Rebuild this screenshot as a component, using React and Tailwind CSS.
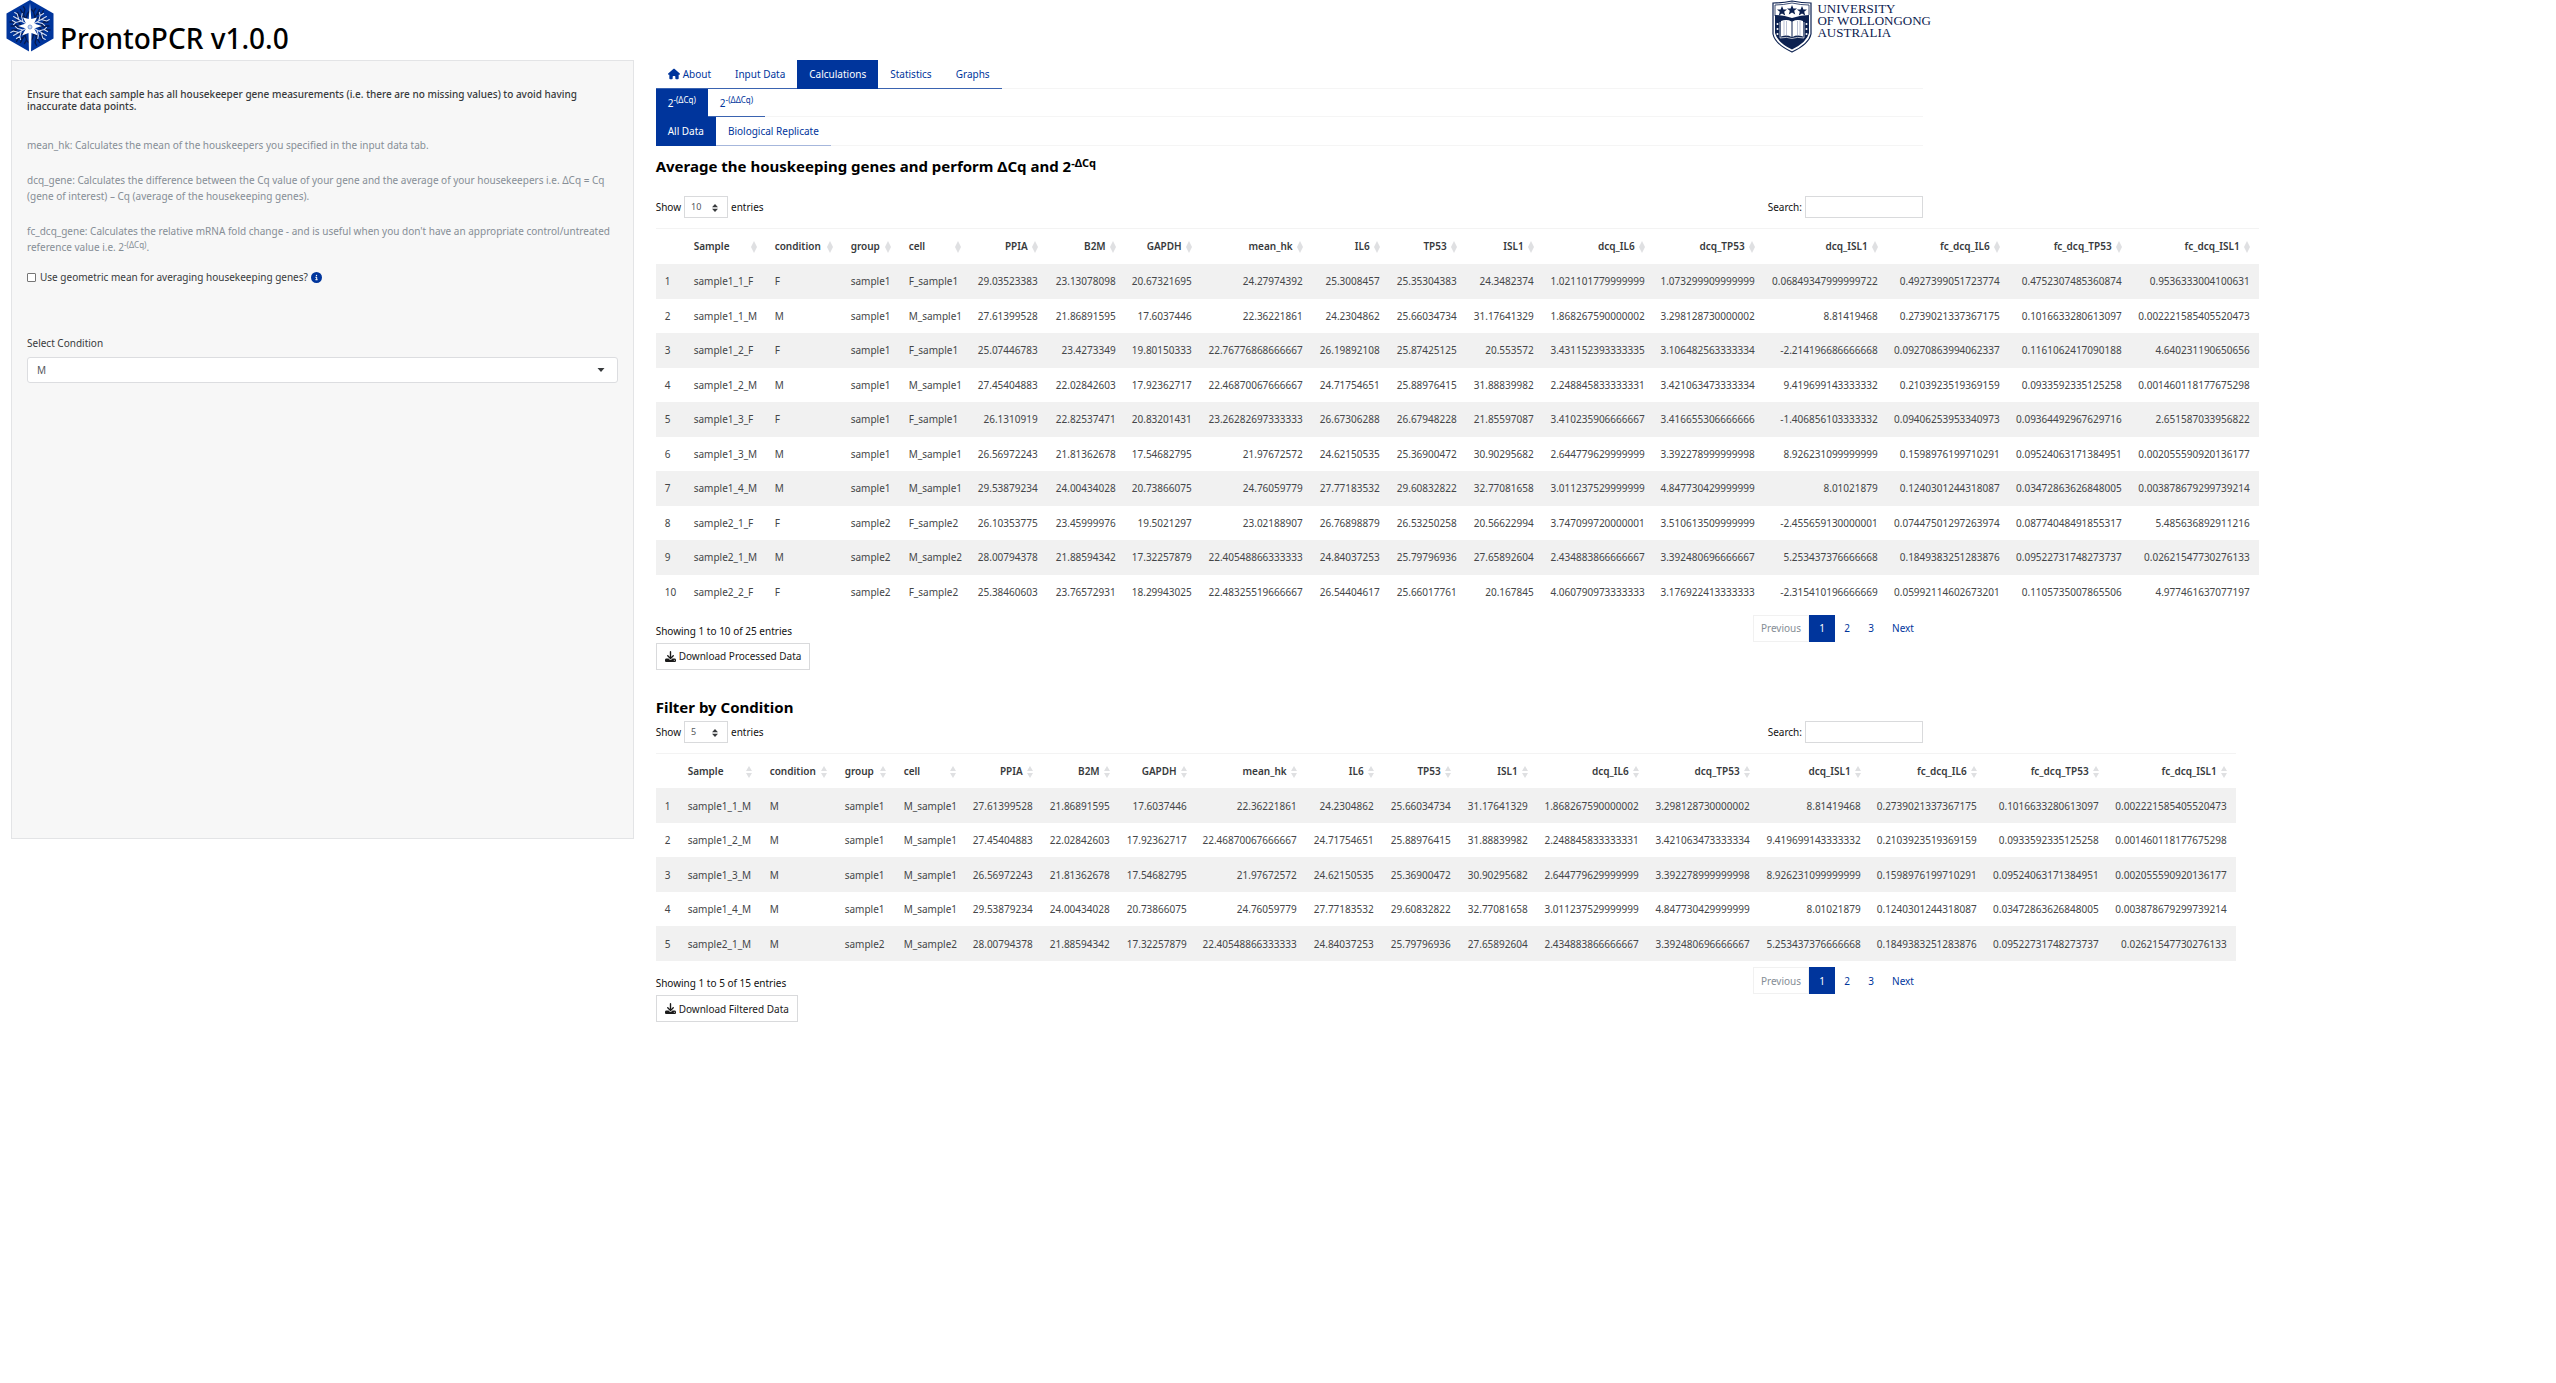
import { FaHouse, FaDownload, FaCircleInfo } from "react-icons/fa6";

const columns = [
  "Sample", "condition", "group", "cell", "PPIA", "B2M", "GAPDH", "mean_hk", "IL6", "TP53", "ISL1",
  "dcq_IL6", "dcq_TP53", "dcq_ISL1", "fc_dcq_IL6", "fc_dcq_TP53", "fc_dcq_ISL1",
];

const allRows = [
  "sample1_1_F F sample1 F_sample1 29.03523383 23.13078098 20.67321695 24.27974392 25.3008457 25.35304383 24.3482374 1.021101779999999 1.073299909999999 0.06849347999999722 0.4927399051723774 0.4752307485360874 0.9536333004100631",
  "sample1_1_M M sample1 M_sample1 27.61399528 21.86891595 17.6037446 22.36221861 24.2304862 25.66034734 31.17641329 1.868267590000002 3.298128730000002 8.81419468 0.2739021337367175 0.1016633280613097 0.002221585405520473",
  "sample1_2_F F sample1 F_sample1 25.07446783 23.4273349 19.80150333 22.76776868666667 26.19892108 25.87425125 20.553572 3.431152393333335 3.106482563333334 -2.214196686666668 0.09270863994062337 0.1161062417090188 4.640231190650656",
  "sample1_2_M M sample1 M_sample1 27.45404883 22.02842603 17.92362717 22.46870067666667 24.71754651 25.88976415 31.88839982 2.248845833333331 3.421063473333334 9.419699143333332 0.2103923519369159 0.0933592335125258 0.001460118177675298",
  "sample1_3_F F sample1 F_sample1 26.1310919 22.82537471 20.83201431 23.26282697333333 26.67306288 26.67948228 21.85597087 3.410235906666667 3.416655306666666 -1.406856103333332 0.09406253953340973 0.09364492967629716 2.651587033956822",
  "sample1_3_M M sample1 M_sample1 26.56972243 21.81362678 17.54682795 21.97672572 24.62150535 25.36900472 30.90295682 2.644779629999999 3.392278999999998 8.926231099999999 0.1598976199710291 0.09524063171384951 0.002055590920136177",
  "sample1_4_M M sample1 M_sample1 29.53879234 24.00434028 20.73866075 24.76059779 27.77183532 29.60832822 32.77081658 3.011237529999999 4.847730429999999 8.01021879 0.1240301244318087 0.03472863626848005 0.003878679299739214",
  "sample2_1_F F sample2 F_sample2 26.10353775 23.45999976 19.5021297 23.02188907 26.76898879 26.53250258 20.56622994 3.747099720000001 3.510613509999999 -2.455659130000001 0.07447501297263974 0.08774048491855317 5.485636892911216",
  "sample2_1_M M sample2 M_sample2 28.00794378 21.88594342 17.32257879 22.40548866333333 24.84037253 25.79796936 27.65892604 2.434883866666667 3.392480696666667 5.253437376666668 0.1849383251283876 0.09522731748273737 0.02621547730276133",
  "sample2_2_F F sample2 F_sample2 25.38460603 23.76572931 18.29943025 22.48325519666667 26.54404617 25.66017761 20.167845 4.060790973333333 3.176922413333333 -2.315410196666669 0.05992114602673201 0.1105735007865506 4.977461637077197",
].map((line) => line.split(" "));

const filteredRows = allRows.filter((row) => row[1] === "M");

const allWidths = [
  "w-[29px]", "w-[81px]", "w-[76px]", "w-[58px]", "w-[70px]", "w-[77px]", "w-[78px]", "w-[76px]", "w-[111px]",
  "w-[77px]", "w-[77px]", "w-[77px]", "w-[111px]", "w-[110px]", "w-[123px]", "w-[122px]", "w-[122px]", "w-[128px]",
];
const filteredWidths = [
  "w-[23px]", "w-[82px]", "w-[75px]", "w-[59px]", "w-[70px]", "w-[77px]", "w-[77px]", "w-[77px]", "w-[110px]",
  "w-[77px]", "w-[77px]", "w-[77px]", "w-[111px]", "w-[111px]", "w-[111px]", "w-[116px]", "w-[122px]", "w-[128px]",
];

function Branch({ angle, stroke, width }) {
  return (
    <g transform={`rotate(${angle} 24 26)`} stroke={stroke} strokeWidth={width} fill="none" strokeLinecap="round">
      <path d="M24 22V7M24 16l-4-4V8M24 13l4-4V6M24 18l4-4 3-1M20 12l-3-1" />
    </g>
  );
}

function HexLogo() {
  return (
    <svg viewBox="0 0 48 52" className="h-[52px] w-12 shrink-0" aria-hidden="true">
      <path d="M24 0L47.500 13.500V38.500L24 52L0.500 38.500V13.500Z" fill="#00359c" />
      {[30, 90, 150, 210, 270, 330].map((a) => (
        <Branch key={a} angle={a} stroke="#041a52" width={1.3} />
      ))}
      {[60, 120, 240, 300].map((a) => (
        <Branch key={a} angle={a} stroke="#d5def1" width={1} />
      ))}
      <path
        d="M24 3L25.300 19L31 17.500L28 23.500L36 26L28 28.500L32 35.500L25.500 33L25 52H23L22.500 33L16 35.500L20 28.500L12 26L20 23.500L17 17.500L22.700 19Z"
        fill="#fff"
      />
      <circle cx="24" cy="27" r="2" fill="#c6d6f2" stroke="#6a8bcb" strokeWidth="0.8" />
    </svg>
  );
}

function Shield() {
  return (
    <svg viewBox="0 0 40 53" className="h-[53px] w-10 shrink-0" aria-hidden="true">
      <path d="M1 3Q10 3 20 1Q30 3 39 3V34Q37 44 20 52Q3 44 1 34Z" fill="#fff" stroke="#0c2150" strokeWidth="1.200" />
      <path d="M3 15Q11 15 20 18Q29 15 37 15V33Q35 42 20 49.500Q5 42 3 33Z" fill="#0c2150" />
      <path d="M3 5Q11 5 20 3Q29 5 37 5V15" fill="none" stroke="#0c2150" strokeWidth="0.800" />
      <path d="M3 5V16" stroke="#0c2150" strokeWidth="0.800" />
      {[[10, 11], [20, 10], [30, 11]].map(([x, y]) => (
        <path
          key={x}
          transform={`translate(${x} ${y})`}
          d="M0-5L1.400-1.600L5-1.500L2.200 0.800L3.200 4.500L0 2.400L-3.200 4.500L-2.200 0.800L-5-1.500L-1.400-1.600Z"
          fill="#0c2150"
        />
      ))}
      <path d="M9 21Q15 19 19.500 21.500V37Q15 34.500 9 36.500Z" fill="#fff" />
      <path d="M31 21Q25 19 20.500 21.500V37Q25 34.500 31 36.500Z" fill="#fff" />
      <path d="M8 22V38Q15 36.500 20 38.500Q25 36.500 32 38V22" fill="none" stroke="#fff" strokeWidth="0.700" />
      <path d="M12 21V35M14.500 21V35M25.500 21V35M28 21V35" stroke="#8d99b8" strokeWidth="0.600" />
      {[24, 29, 34].map((y) => (
        <g key={y} fill="#fff">
          <circle cx="5.500" cy={y} r="1" />
          <circle cx="34.500" cy={y} r="1" />
        </g>
      ))}
    </svg>
  );
}

function SortIcon({ split }) {
  return (
    <svg viewBox="0 0 6 12" className="absolute top-3 right-[9px] h-3 w-[6px] fill-[#dfe0e2]" aria-hidden="true">
      <path d={split ? "M3 0L6 5H0Z" : "M3 0L6 6H0Z"} />
      <path d={split ? "M3 12L6 7H0Z" : "M3 12L6 6H0Z"} />
    </svg>
  );
}

function Tab({ active, faint, children }) {
  const look = active
    ? "border-[#00359c] bg-[#00359c] text-white"
    : faint
      ? "border-[#a6b7dc] text-[#00359c]"
      : "border-[#3a63b0] text-[#00359c]";
  return (
    <button type="button" role="tab" aria-selected={!!active} className={`relative -mb-px flex items-center gap-[3px] border-b px-3 ${look}`}>
      {children}
    </button>
  );
}

function TabBar({ height, label, children }) {
  return (
    <div role="tablist" aria-label={label} className={`flex border-b border-[#f5f5f5] ${height}`}>
      {children}
    </div>
  );
}

function DataTable({ id, rows, widths, length, total, split, filename }) {
  return (
    <section>
      <div className="flex items-center justify-between">
        <label htmlFor={`${id}-length`} className="flex items-center gap-[3px]">
          Show
          <span className="relative">
            <select
              id={`${id}-length`}
              defaultValue={length}
              className="h-[22px] w-11 appearance-none border border-[#d9dadc] bg-white px-1.5 text-[9px] text-[#55595c]"
            >
              <option>5</option>
              <option>10</option>
              <option>25</option>
            </select>
            <svg viewBox="0 0 6 8" className="pointer-events-none absolute top-2 right-2.5 h-2 w-1.5 fill-[#373a3c]" aria-hidden="true">
              <path d="M3 0L6 3.300H0ZM3 8L6 4.700H0Z" />
            </svg>
          </span>
          entries
        </label>
        <label htmlFor={`${id}-search`} className="flex items-center gap-[3px]">
          Search:
          <input id={`${id}-search`} type="search" className="h-[22px] w-[118px] border border-[#d9dadc] bg-white px-1.5" />
        </label>
      </div>
      <table className="mt-2.5 w-full table-fixed border-t border-[#f3f3f3] text-[10px] leading-4 text-[#444648]">
        <colgroup>
          {widths.map((w, i) => (
            <col key={i} className={w} />
          ))}
        </colgroup>
        <thead>
          <tr className="h-[35px] text-[#373a3c]">
            <th aria-label="Row" />
            {columns.map((c, i) => (
              <th key={c} scope="col" className={`relative pl-[9px] font-semibold whitespace-nowrap ${i > 3 ? "pr-[19px] text-right" : "text-left"}`}>
                {c}
                <SortIcon split={split} />
              </th>
            ))}
          </tr>
        </thead>
        <tbody>
          {rows.map((row, r) => (
            <tr key={row[0]} className="h-[34px] whitespace-nowrap odd:h-[35px] odd:bg-[#f1f1f1]">
              <td className="pl-[9px]">{r + 1}</td>
              {row.map((v, i) => (
                <td key={i} className={i > 3 ? "pr-[9px] text-right" : "pl-[9px]"}>
                  {v}
                </td>
              ))}
            </tr>
          ))}
        </tbody>
      </table>
      <div className="mt-1.5 flex items-start justify-between">
        <div>
          <p className="mt-2 leading-4">
            Showing 1 to {length} of {total} entries
          </p>
          <button type="button" className="mt-1 flex h-[27px] items-center gap-[3px] border border-[#d9dadc] px-2 text-[#1a1a1a]">
            <FaDownload className="size-[11px]" aria-hidden="true" />
            {filename}
          </button>
        </div>
        <nav aria-label="Table pages" className="flex h-[27px] text-[#00359c]">
          <button type="button" disabled className="border border-[#f1f1f1] px-[7px] text-[#868e96]">
            Previous
          </button>
          <button type="button" aria-current="page" className="w-[26px] bg-[#00359c] text-white">
            1
          </button>
          <button type="button" className="w-6">2</button>
          <button type="button" className="w-6">3</button>
          <button type="button" className="px-[9px]">Next</button>
        </nav>
      </div>
    </section>
  );
}

export default function App() {
  return (
    <div className="min-h-screen bg-white font-['Noto_Sans','Open_Sans',sans-serif] text-[10px] leading-4 text-[#111]">
      <div className="max-w-[1934px]">
        <header className="flex h-[60px] items-start justify-between pr-[3px] pl-1.5">
          <div className="flex items-start gap-[6px]">
            <HexLogo />
            <h1 className="pt-[18px] text-[28px] leading-10 font-medium text-black">ProntoPCR v1.0.0</h1>
          </div>
          <div className="flex items-start gap-[5px] text-[#0c2150]">
            <Shield />
            <p className="pt-[3px] font-['Liberation_Serif',serif] text-[13px] leading-[12px]">
              UNIVERSITY
              <br />
              OF WOLLONGONG
              <br />
              AUSTRALIA
            </p>
          </div>
        </header>

        <div className="flex items-start">
          <aside className="w-1/3 shrink-0 px-[11px]">
            <form className="min-h-[779px] border border-[#e3e4e6] bg-[#f7f7f7] px-[15px] pt-[27px] text-[#868e96]">
              <p className="text-[10px] leading-3 font-medium text-[#373a3c]">
                Ensure that each sample has all housekeeper gene measurements (i.e. there are no missing values) to avoid having
                inaccurate data points.
              </p>
              <p className="mt-[25px]">mean_hk: Calculates the mean of the houskeepers you specified in the input data tab.</p>
              <p className="mt-[19px]">
                dcq_gene: Calculates the difference between the Cq value of your gene and the average of your housekeepers i.e. ΔCq = Cq
                (gene of interest) – Cq (average of the housekeeping genes).
              </p>
              <p className="mt-[19px]">
                fc_dcq_gene: Calculates the relative mRNA fold change - and is useful when you don't have an appropriate
                control/untreated reference value i.e. 2<sup className="-top-[3px] text-[8px]">-(ΔCq)</sup>.
              </p>
              <div className="mt-[14px] flex items-center text-[#373a3c]">
                <input
                  id="geometric"
                  type="checkbox"
                  className="size-[9px] appearance-none rounded-[1px] border border-[#767676] bg-white checked:bg-[#00359c]"
                />
                <label htmlFor="geometric" className="ml-1">
                  Use geometric mean for averaging housekeeping genes?
                </label>
                <FaCircleInfo className="ml-[3px] size-[11px] text-[#00359c]" aria-hidden="true" />
              </div>
              <label htmlFor="condition" className="mt-[50px] block text-[#373a3c]">
                Select Condition
              </label>
              <div className="relative mt-1.5">
                <select
                  id="condition"
                  defaultValue="M"
                  className="h-[26px] w-full appearance-none rounded-[3px] border border-[#dcdde0] bg-white px-[9px] text-[#55595c]"
                >
                  <option>M</option>
                  <option>F</option>
                </select>
                <svg viewBox="0 0 8 4" className="pointer-events-none absolute top-[11px] right-[13px] h-1 w-2 fill-[#373a3c]" aria-hidden="true">
                  <path d="M0.500 0H7.500L4 4Z" />
                </svg>
              </div>
            </form>
          </aside>

          <main className="w-2/3 min-w-0 px-[11px]">
            <TabBar label="Pages" height="h-[29px]">
              <Tab>
                <FaHouse className="size-3" aria-hidden="true" />
                About
              </Tab>
              <Tab>Input Data</Tab>
              <Tab active>Calculations</Tab>
              <Tab>Statistics</Tab>
              <Tab>Graphs</Tab>
            </TabBar>
            <TabBar label="Methods" height="h-7">
              <Tab active>
                <span>2<sup className="text-[8px]">-(ΔCq)</sup></span>
              </Tab>
              <Tab>
                <span>2<sup className="text-[8px]">-(ΔΔCq)</sup></span>
              </Tab>
            </TabBar>
            <TabBar label="Data" height="h-[29px]">
              <Tab active>All Data</Tab>
              <Tab faint>Biological Replicate</Tab>
            </TabBar>

            <h2 className="mt-2.5 mb-5 text-[15px] leading-5 font-bold text-black">
              Average the houskeeping genes and perform ΔCq and 2<sup className="text-[11px]">-ΔCq</sup>
            </h2>
            <DataTable id="all" rows={allRows} widths={allWidths} length={10} total={25} filename="Download Processed Data" />

            <h2 className="mt-[27px] mb-1 text-[15px] leading-5 font-bold text-black">Filter by Condition</h2>
            <DataTable id="filtered" rows={filteredRows} widths={filteredWidths} length={5} total={15} split filename="Download Filtered Data" />
          </main>
        </div>
      </div>
    </div>
  );
}
